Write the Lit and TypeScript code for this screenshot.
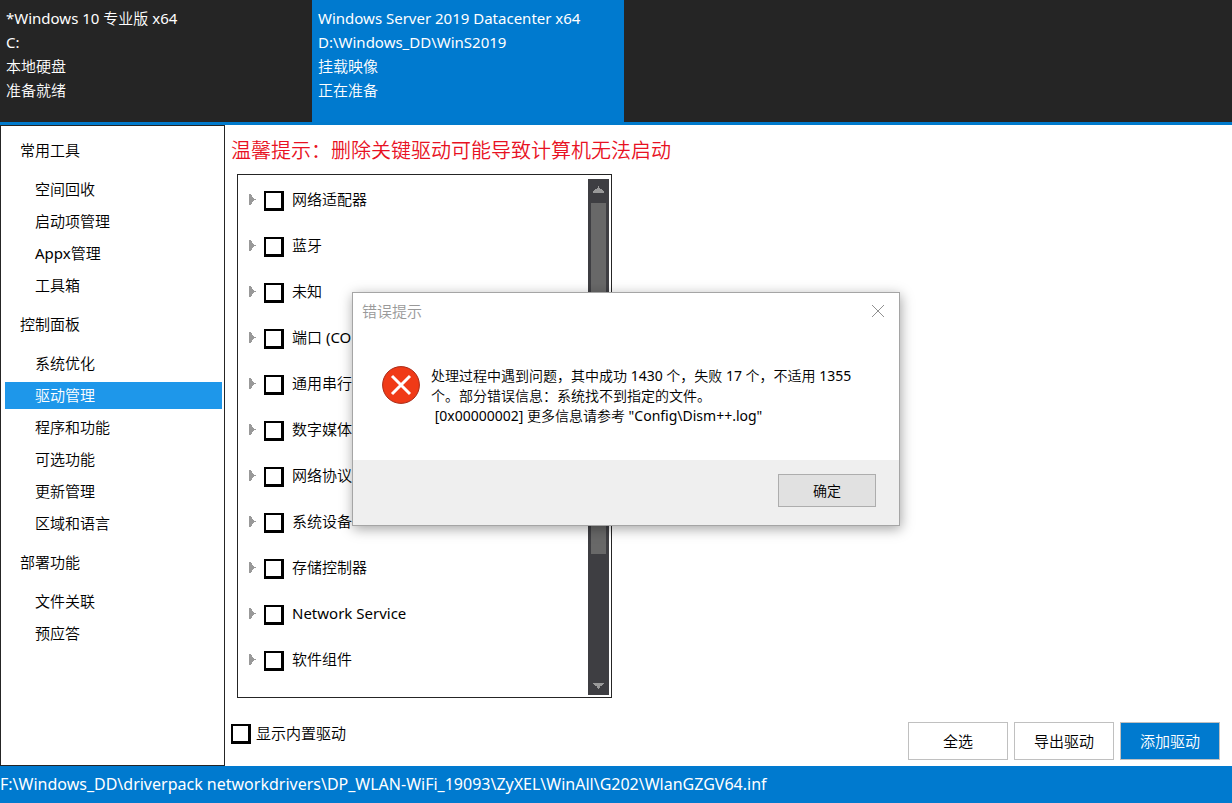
import { LitElement, html, css } from "lit";
import { customElement, property, state } from "lit/decorators.js";
import { classMap } from "lit/directives/class-map.js";

interface Session {
  name: string;
  path: string;
  kind: string;
  status: string;
}

interface Group {
  title: string;
  items: string[];
}

const SESSIONS: Session[] = [
  { name: "*Windows 10 专业版 x64", path: "C:", kind: "本地硬盘", status: "准备就绪" },
  {
    name: "Windows Server 2019 Datacenter x64",
    path: "D:\\Windows_DD\\WinS2019",
    kind: "挂载映像",
    status: "正在准备",
  },
];

const GROUPS: Group[] = [
  { title: "常用工具", items: ["空间回收", "启动项管理", "Appx管理", "工具箱"] },
  {
    title: "控制面板",
    items: ["系统优化", "驱动管理", "程序和功能", "可选功能", "更新管理", "区域和语言"],
  },
  { title: "部署功能", items: ["文件关联", "预应答"] },
];

const CATEGORIES = [
  "网络适配器",
  "蓝牙",
  "未知",
  "端口 (COM 和 LPT)",
  "通用串行总线控制器",
  "数字媒体设备",
  "网络协议",
  "系统设备",
  "存储控制器",
  "Network Service",
  "软件组件",
];

const reset = css`
  * {
    box-sizing: border-box;
  }
  button {
    margin: 0;
    padding: 0;
    border: 0;
    border-radius: 0;
    background: none;
    color: inherit;
    font: inherit;
  }
`;

const checkbox = css`
  .check {
    appearance: none;
    flex: none;
    width: 20px;
    height: 20px;
    margin: 0;
    border: solid #000;
    border-width: 2px 3px 3px 2px;
    background: #fff;
  }
  .check:checked {
    background: #000;
    background-clip: content-box;
    padding: 3px;
  }
`;

@customElement("session-tabs")
class SessionTabs extends LitElement {
  @state() private current = 1;

  static styles = [
    reset,
    css`
      :host {
        display: flex;
        height: 125px;
        background: #252525;
        border-bottom: 3px solid #007acc;
        color: #fff;
      }
      .tab {
        display: flex;
        flex-direction: column;
        width: 312px;
        padding: 6px;
        line-height: 24px;
        text-align: left;
        white-space: nowrap;
      }
      .active {
        background: #007acf;
      }
    `,
  ];

  render() {
    return SESSIONS.map(
      (s, i) => html`
        <button
          class=${classMap({ tab: true, active: i === this.current })}
          @click=${() => (this.current = i)}
        >
          <span>${s.name}</span><span>${s.path}</span><span>${s.kind}</span><span>${s.status}</span>
        </button>
      `
    );
  }
}

@customElement("side-nav")
class SideNav extends LitElement {
  @state() private current = "驱动管理";

  static styles = [
    reset,
    css`
      :host {
        box-sizing: border-box;
        display: flex;
        flex-direction: column;
        flex: none;
        width: 225px;
        padding: 11px 2px 0 4px;
        border: 1px solid #252525;
        line-height: 27px;
      }
      .title {
        margin: 0 0 12px;
        padding-left: 15px;
        font-size: 15px;
        font-weight: inherit;
      }
      .list {
        display: flex;
        flex-direction: column;
        gap: 5px;
        margin: 0 0 12px;
        padding: 0;
        list-style: none;
      }
      .item {
        display: block;
        width: 100%;
        height: 27px;
        padding-left: 30px;
        text-align: left;
      }
      .selected {
        background: #1e97ea;
        color: #fff;
      }
    `,
  ];

  render() {
    return GROUPS.map(
      (g) => html`
        <h2 class="title">${g.title}</h2>
        <ul class="list">
          ${g.items.map(
            (item) => html`<li>
              <button
                class=${classMap({ item: true, selected: item === this.current })}
                @click=${() => (this.current = item)}
              >${item}</button>
            </li>`
          )}
        </ul>
      `
    );
  }
}

@customElement("driver-tree")
class DriverTree extends LitElement {
  static styles = [
    reset,
    checkbox,
    css`
      :host {
        box-sizing: border-box;
        display: flex;
        width: 375px;
        padding: 4px 2px 2px 0;
        border: 1px solid #252525;
      }
      .rows {
        flex: 1;
        margin: 0;
        padding: 0;
        list-style: none;
        overflow: hidden;
      }
      .row {
        display: flex;
        align-items: center;
        height: 46px;
        padding: 0 0 2px 11px;
      }
      .expander {
        display: flex;
        width: 15px;
        padding-bottom: 3px;
      }
      .label {
        display: flex;
        align-items: flex-start;
        gap: 8px;
        line-height: 16px;
        white-space: nowrap;
      }
      .track {
        display: flex;
        flex-direction: column;
        width: 21px;
        background: #3e3e42;
      }
      .arrow {
        display: flex;
        justify-content: center;
        height: 24px;
      }
      .up {
        align-items: flex-start;
        padding-top: 7px;
      }
      .down {
        align-items: flex-end;
        padding-bottom: 6px;
      }
      .lane {
        flex: 1;
        padding: 0 3px;
      }
      .thumb {
        height: 75%;
        background: #686868;
      }
    `,
  ];

  render() {
    return html`
      <ul class="rows">
        ${CATEGORIES.map(
          (c) => html`<li class="row">
            <button class="expander" aria-label="展开">
              <svg width="7" height="11" viewBox="0 0 7 11" fill="#999">
                <path d="M0 0h2v1h1v2h1v1h1v1h2v1H5v1H4v1H3v2H2v1H0z" />
              </svg>
            </button>
            <label class="label"><input class="check" type="checkbox" />${c}</label>
          </li>`
        )}
      </ul>
      <div class="track">
        <button class="arrow up" aria-label="向上">
          <svg width="11" height="7" viewBox="0 0 11 7" fill="#999">
            <path d="M5 0h1v2h1v1h2v1h1v1h1v2H0V5h1V4h1V3h2V2h1z" />
          </svg>
        </button>
        <div class="lane"><div class="thumb"></div></div>
        <button class="arrow down" aria-label="向下">
          <svg width="11" height="6" viewBox="0 0 11 6" fill="#999">
            <path d="M0 0h11v1h-1v1H9v1H7v2H6v1H5V5H4V3H2V2H1V1H0z" />
          </svg>
        </button>
      </div>
    `;
  }
}

@customElement("error-dialog")
class ErrorDialog extends LitElement {
  @property({ type: Boolean }) open = false;

  static styles = [
    reset,
    css`
      .dialog {
        position: absolute;
        top: 292px;
        left: 352px;
        width: 548px;
        margin: 0;
        padding: 0;
        border: 1px solid #a5a5a5;
        background: #fff;
        color: #000;
        box-shadow: 1px 3px 12px rgba(0, 0, 0, 0.36);
      }
      .bar {
        display: flex;
        justify-content: space-between;
        align-items: center;
        height: 37px;
        padding: 0 14px 2px 9px;
      }
      .caption {
        margin: 0;
        font-size: 15px;
        font-weight: inherit;
        color: #999;
      }
      .close {
        display: flex;
      }
      .body {
        display: flex;
        gap: 11px;
        height: 130px;
        padding: 36px 29px 0;
      }
      .badge {
        flex: none;
      }
      .message {
        margin: 0;
        font-size: 14px;
        line-height: 20px;
        white-space: pre;
      }
      .footer {
        display: flex;
        justify-content: flex-end;
        padding: 14px 23px 18px;
        background: #efefef;
      }
      .ok {
        width: 98px;
        height: 33px;
        padding-bottom: 2px;
        border: 1px solid #adadad;
        background: #e1e1e1;
        font-size: 14px;
      }
    `,
  ];

  private close() {
    this.open = false;
  }

  render() {
    return html`
      <dialog class="dialog" ?open=${this.open} aria-labelledby="caption">
        <div class="bar">
          <h2 class="caption" id="caption">错误提示</h2>
          <button class="close" aria-label="关闭" @click=${this.close}>
            <svg width="14" height="14" viewBox="0 0 14 14" stroke="#909090" fill="none">
              <path d="M1 1l12 12M13 1L1 13" />
            </svg>
          </button>
        </div>
        <div class="body">
          <svg class="badge" width="38" height="38" viewBox="0 0 38 38">
            <circle cx="19" cy="19" r="18.4" fill="#f03a17" stroke="#a92a16" />
            <path
              d="M10 10l18 18M28 10L10 28"
              stroke="#fff"
              stroke-width="3"
              fill="none"
            />
          </svg>
          <p class="message">处理过程中遇到问题，其中成功 1430 个，失败 17 个，不适用 1355<br />个。部分错误信息：系统找不到指定的文件。<br /> [0x00000002] 更多信息请参考 "Config\\Dism++.log"</p>
        </div>
        <div class="footer"><button class="ok" @click=${this.close}>确定</button></div>
      </dialog>
    `;
  }
}

@customElement("app-root")
class AppRoot extends LitElement {
  static styles = [
    reset,
    checkbox,
    css`
      :host {
        position: relative;
        display: flex;
        flex-direction: column;
        min-height: 100vh;
        background: #fff;
        color: #000;
        font: 15px "Noto Sans", "Noto Sans CJK SC DemiLight", "Noto Sans CJK SC", sans-serif;
      }
      .content {
        flex: 1;
        display: flex;
      }
      .main {
        flex: 1;
        display: flex;
        flex-direction: column;
        padding: 11px 12px 6px 6px;
      }
      .warning {
        margin: 0 0 8px;
        color: #e81123;
        font-size: 20px;
        font-weight: 350;
        line-height: 30px;
      }
      .tree {
        flex: 1;
        margin-left: 6px;
      }
      .actions {
        display: flex;
        align-items: flex-end;
        gap: 6px;
        margin-top: 24px;
      }
      .builtin {
        display: flex;
        align-self: flex-start;
        gap: 5px;
        margin: 2px auto 0 0;
        line-height: 18px;
      }
      .button {
        width: 100px;
        height: 38px;
        padding-bottom: 2px;
        border: 1px solid #c0c0c0;
        background: #fff;
      }
      .primary {
        background: #007acf;
        color: #fff;
      }
      .status {
        height: 37px;
        background: #007acf;
        color: #fff;
        font-size: 16px;
        line-height: 36px;
      }
    `,
  ];

  render() {
    return html`
      <session-tabs></session-tabs>
      <div class="content">
        <side-nav></side-nav>
        <main class="main">
          <h1 class="warning">温馨提示：删除关键驱动可能导致计算机无法启动</h1>
          <driver-tree class="tree"></driver-tree>
          <div class="actions">
            <label class="builtin"><input class="check" type="checkbox" />显示内置驱动</label>
            <button class="button">全选</button>
            <button class="button">导出驱动</button>
            <button class="button primary">添加驱动</button>
          </div>
        </main>
      </div>
      <footer class="status">F:\\Windows_DD\\driverpack networkdrivers\\DP_WLAN-WiFi_19093\\ZyXEL\\WinAll\\G202\\WlanGZGV64.inf</footer>
      <error-dialog open></error-dialog>
    `;
  }
}
